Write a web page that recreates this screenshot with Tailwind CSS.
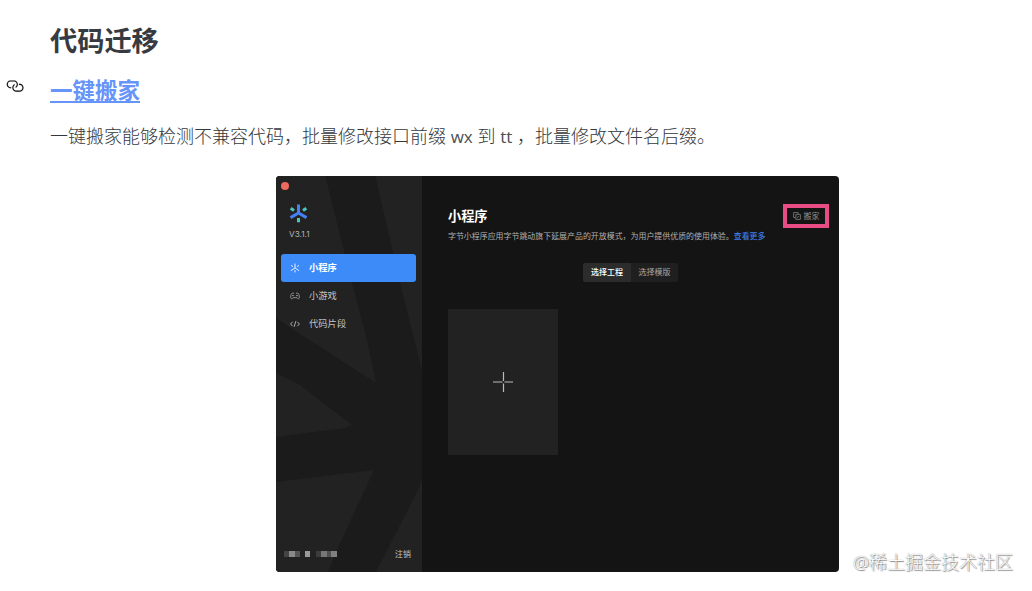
<!DOCTYPE html>
<html lang="zh-CN">
<head>
    <meta charset="UTF-8">
    <meta name="viewport" content="width=device-width, initial-scale=1.0">
    <title>代码迁移</title>
    <script src="https://cdn.jsdelivr.net/npm/@tailwindcss/browser@4"></script>
</head>
<body class="bg-white h-[591px] overflow-hidden relative font-['Noto_Sans','Noto_Sans_CJK_SC',sans-serif]">
    <main class="pl-[50px] pt-[22px]">
        <h1 class="text-[27.2px] leading-[38px] font-bold text-[#373a40]">代码迁移</h1>
        <div class="flex items-center -ml-[44.5px] mt-[11px] h-[38px]">
            <!-- anchor icon -->
            <svg class="w-[18px] h-[18px] mr-[26.5px] -mt-[9px]" viewBox="0.4 0 16 16" fill="#111" stroke="#111" stroke-width=".1">
                <path d="M4 9h1v1H4c-1.5 0-3-1.69-3-3.5S2.55 3 4 3h4c1.45 0 3 1.69 3 3.5 0 1.41-.91 2.72-2 3.25V8.59c.58-.45 1-1.27 1-2.09C10 5.28 8.98 4 8 4H4c-.98 0-2 1.22-2 2.5S3 9 4 9zm9-3h-1v1h1c1 0 2 1.22 2 2.5S13.98 12 13 12H9c-.98 0-2-1.22-2-2.5 0-.83.42-1.64 1-2.09V6.25c-1.09.53-2 1.84-2 3.25C6 11.31 7.55 13 9 13h4c1.45 0 3-1.69 3-3.5S14.5 6 13 6z"/>
            </svg>
            <h2><a href="#" class="block text-[22.5px] leading-[25px] h-[25px] font-bold text-[#6694f8] border-b-2 border-[#6694f8]">一键搬家</a></h2>
        </div>
        <p class="mt-[12px] text-[18px] leading-[30px] font-light text-[#34383c] whitespace-nowrap">一键搬家能够检测不兼容代码，批量修改接口前缀 <span class="font-['Open_Sans'] font-normal text-[17px] text-[#4a4e52]">wx</span> 到 <span class="font-['Open_Sans'] font-normal text-[17px] text-[#4a4e52]">tt</span> ，批量修改文件名后缀。</p>

        <!-- app window -->
        <div class="relative mt-[24px] ml-[226px] w-[563px] h-[396px] rounded-[4px] overflow-hidden bg-[#141414] flex">
            <aside class="relative w-[146px] h-full bg-[#1b1b1b] flex flex-col">
                <svg class="absolute inset-0 w-[146px] h-[396px]" viewBox="276 176 146 396" fill="#222">
                    <path d="M276 175H325L352 283 367 340 376 383 297 332 276 318z"/>
                    <path d="M276 373L300 385 352 425 345 428 276 437z"/>
                    <path d="M276 482L374 470 337 550 328 572H276z"/>
                    <path d="M375 175H422V370L400 283z"/>
                    <path d="M422 480L418 490 376 572H422z"/>
                </svg>
                <div class="relative flex flex-col h-full">
                    <div class="ml-[5px] mt-[6px] w-2 h-2 rounded-full bg-[#ee6a5f]"></div>
                    <svg class="ml-[13px] mt-[14px] w-[19px] h-[19px]" viewBox="0 0 19 19" fill="none" stroke-width="3">
                        <path d="M9.5 .5V9.5M9.5 9L1.5 13.6M9.5 9L17.5 13.6" stroke="#4580f5"/>
                        <path d="M1.7 4.3L5 6.5M17.3 4.3L14 6.5M9.5 14V18.3" stroke="#4cc4bd"/>
                    </svg>
                    <span class="ml-[13px] mt-[5px] text-[8.2px] leading-[12px] font-['Inter'] text-[#b5b5b5]">V3.1.1</span>
                    <nav class="mt-[14px] mx-[5px] flex flex-col text-[9.3px] text-[#c4c4c4]">
                        <a class="flex items-center h-7 w-[135px] rounded-[3px] bg-[#3d8bf8] text-white font-bold">
                            <svg class="ml-[9px] mr-[9px] w-[10px] h-[10px]" viewBox="0 0 9 9" fill="none" stroke="#fff" stroke-width=".8"><path d="M4.5 .5V4.4L.8 7M4.5 4.4L8.2 7M1 2.2L2.6 3.2M8 2.2L6.4 3.2M4.5 6.5V8.5"/></svg>
                            小程序
                        </a>
                        <a class="flex items-center h-7">
                            <svg class="ml-[9px] mr-[9px] w-[10px] h-[8px]" viewBox="0 0 10 8" fill="none" stroke="#aaa" stroke-width=".8"><path d="M4 1.2H2.5C1.2 1.2.7 3.2.7 5 .7 7.3 2.3 7.3 3 5.7H7C7.7 7.3 9.3 7.3 9.3 5 9.3 3.2 8.8 1.2 7.5 1.2H6M2 3.6H4M6 3.6H8"/></svg>
                            小游戏
                        </a>
                        <a class="flex items-center h-7">
                            <svg class="ml-[9px] mr-[9px] w-[10px] h-[8px]" viewBox="0 0 10 8" fill="none" stroke="#bbb" stroke-width=".9"><path d="M2.6 1.8L.6 4 2.6 6.2M7.4 1.8L9.4 4 7.4 6.2M5.8 1.2L4.2 6.8"/></svg>
                            代码片段
                        </a>
                    </nav>
                    <div class="mt-auto mb-[12px] mx-2 flex items-center justify-between pr-[3px]">
                        <!-- masked account name -->
                        <div class="flex h-[6px]">
                            <i class="w-[5px] bg-[#444]"></i><i class="w-[6px] bg-[#8a8a8a]"></i><i class="w-[5px] bg-[#555]"></i>
                            <i class="w-[5px] ml-[5px] bg-[#999]"></i>
                            <i class="w-[5px] ml-[6px] bg-[#3c3c3c]"></i><i class="w-[6px] bg-[#777]"></i><i class="w-[4px] bg-[#505050]"></i><i class="w-[6px] bg-[#808080]"></i>
                        </div>
                        <span class="text-[8px] leading-[12px] text-[#c4c4c4]">注销</span>
                    </div>
                </div>
            </aside>
            <section class="flex-1 pl-[26px] pt-[28px] pr-[10px]">
                <div class="flex justify-between h-[25px]">
                    <h3 class="text-[13.2px] leading-[25px] font-bold text-white">小程序</h3>
                    <button class="flex items-center justify-center gap-[3px] w-[46px] h-[24px] border-4 border-[#e84c84] text-[8px] text-[#909090]">
                        <svg class="w-2 h-2" viewBox="0 0 8 8" fill="none" stroke="#808080" stroke-width=".8"><path d="M2.5 5.5H.6V.6H5.2V2M2.8 2.4H7.4V7.4H2.8zM4 5.8L6 4"/></svg>
                        搬家
                    </button>
                </div>
                <p class="text-[7.95px] leading-[14px] text-[#b0b0b0] whitespace-nowrap">字节小程序应用字节跳动旗下延展产品的开放模式，为用户提供优质的使用体验。<a class="text-[#3d7de8] font-medium">查看更多</a></p>
                <div class="flex mt-[20px] ml-[135px] w-[95px] h-[19px] rounded-[2px] overflow-hidden bg-[#1f1f1f] text-[8px] leading-[18px] text-center">
                    <span class="w-[48px] bg-[#2c2c2c] text-white font-medium">选择工程</span>
                    <span class="flex-1 text-[#a8a8a8]">选择模版</span>
                </div>
                <div class="mt-[27px] w-[110px] h-[146px] bg-[#222] flex items-center justify-center">
                    <svg class="w-5 h-5" viewBox="0 0 20 20" stroke="#bbb" stroke-width="1.2"><path d="M0 10H9.5M11.5 10H20M10.5 0V9M10.5 11.5V20"/></svg>
                </div>
            </section>
        </div>
    </main>
    <!-- watermark -->
    <div class="absolute left-[853px] top-[549px] text-[18px] leading-[26px] font-light text-white whitespace-nowrap [text-shadow:0_0_1px_#777,1px_1px_1px_#888]">@稀土掘金技术社区</div>
</body>
</html>
